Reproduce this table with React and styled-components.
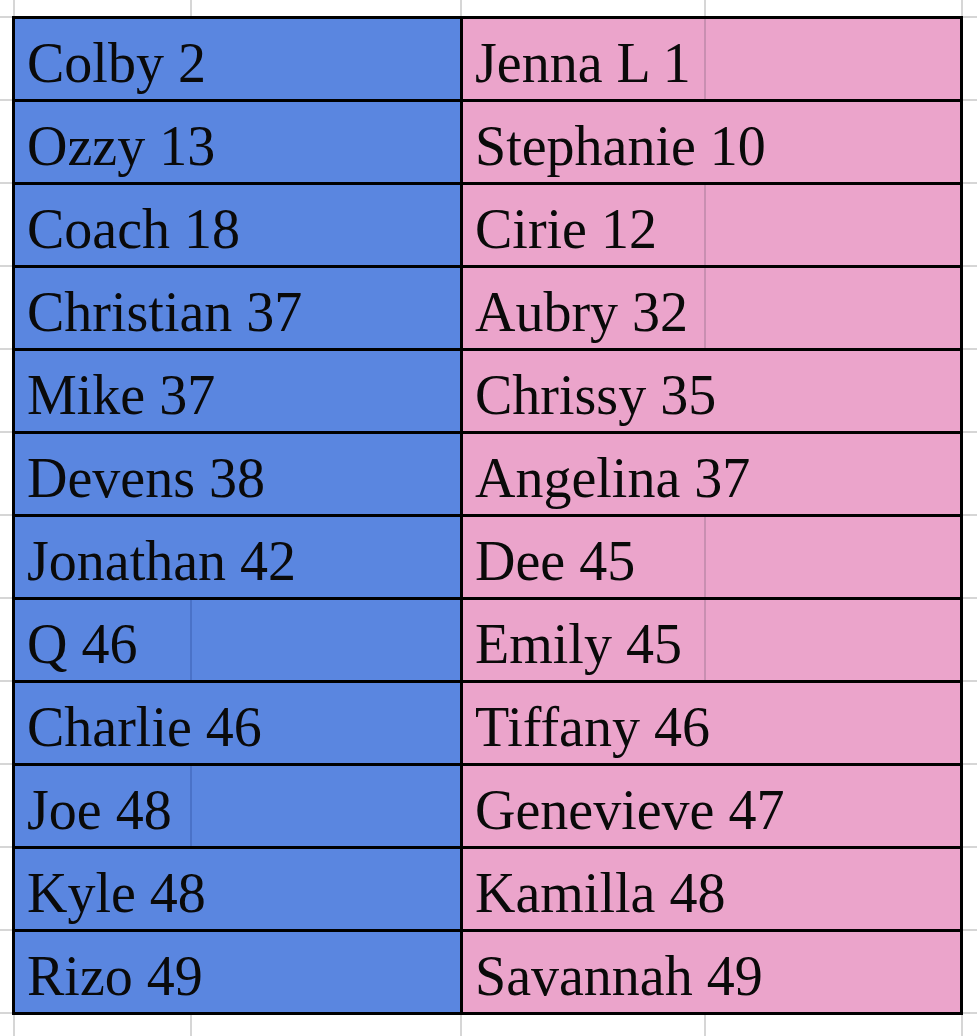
import React from "react";
import styled, { createGlobalStyle } from "styled-components";

const GRID = "#d6d6d6";
const INK = "#0a0a0a";

const Global = createGlobalStyle`
  html, body { margin: 0; padding: 0; background: #ffffff; }
  body { overflow: hidden; }
`;

const Page = styled.div`
  width: 977px;
  height: 1036px;
  display: flex;
  flex-direction: column;
  background: #ffffff;
`;

/* strips of spreadsheet column lines above and below the table */
const ColumnStrip = styled.div`
  height: ${(p) => p.$h}px;
  display: grid;
  grid-template-columns: 15px 177px 270px 244px 257px 1fr;
`;

const StripCell = styled.div`
  box-sizing: border-box;
  border-right: 2px solid ${(p) => (p.$last ? "transparent" : GRID)};
`;

const Middle = styled.div`
  display: flex;
`;

const Gutter = styled.div`
  width: ${(p) => p.$w}px;
  display: flex;
  flex-direction: column;
`;

const GutterCell = styled.div`
  height: 83px;
  box-sizing: border-box;
  border-top: 2px solid ${GRID};
  &:last-child {
    height: 2px;
  }
`;

const Table = styled.div`
  display: grid;
  grid-template-columns: 445px 497px;
  grid-auto-rows: 80px;
  gap: 3px;
  padding: 3px;
  background: #000000;
`;

const Cell = styled.div`
  display: grid;
  grid-template-columns: ${(p) => p.$split}px 1fr;
  background: ${(p) => (p.$team === "blue" ? "#5a86e0" : "#eba4cb")};
  overflow: hidden;
`;

const NameBox = styled.div`
  box-sizing: border-box;
  border-right: 2px solid
    ${(p) =>
      p.$line ? (p.$team === "blue" ? "#4a72c8" : "#c88fb1") : "transparent"};
  padding: 13px 0 0 12px;
  white-space: nowrap;
  overflow: visible;
  position: relative;
  z-index: 1;
`;

const Name = styled.span`
  font-family: "Liberation Serif", "Times New Roman", serif;
  font-size: 56px;
  line-height: 62px;
  color: ${INK};
`;

const blue = [
  ["Colby 2", false],
  ["Ozzy 13", false],
  ["Coach 18", false],
  ["Christian 37", false],
  ["Mike 37", false],
  ["Devens 38", false],
  ["Jonathan 42", false],
  ["Q 46", true],
  ["Charlie 46", false],
  ["Joe 48", true],
  ["Kyle 48", false],
  ["Rizo 49", false],
];

const pink = [
  ["Jenna L 1", true],
  ["Stephanie 10", false],
  ["Cirie 12", true],
  ["Aubry 32", true],
  ["Chrissy 35", false],
  ["Angelina 37", false],
  ["Dee 45", true],
  ["Emily 45", true],
  ["Tiffany 46", false],
  ["Genevieve 47", false],
  ["Kamilla 48", false],
  ["Savannah 49", false],
];

const Strip = ({ h }) => (
  <ColumnStrip $h={h}>
    {[0, 1, 2, 3, 4, 5].map((i) => (
      <StripCell key={i} $last={i === 5} />
    ))}
  </ColumnStrip>
);

const SideGutter = ({ w }) => (
  <Gutter $w={w}>
    {Array.from({ length: 13 }).map((_, i) => (
      <GutterCell key={i} />
    ))}
  </Gutter>
);

export default function App() {
  return (
    <>
      <Global />
      <Page>
        <Strip h={16} />
        <Middle>
          <SideGutter w={12} />
          <Table>
            {blue.map((b, i) => [
              <Cell key={`b${i}`} $team="blue" $split={177}>
                <NameBox $team="blue" $line={b[1]}>
                  <Name>{b[0]}</Name>
                </NameBox>
                <div />
              </Cell>,
              <Cell key={`p${i}`} $team="pink" $split={243}>
                <NameBox $team="pink" $line={pink[i][1]}>
                  <Name>{pink[i][0]}</Name>
                </NameBox>
                <div />
              </Cell>,
            ])}
          </Table>
          <SideGutter w={14} />
        </Middle>
        <Strip h={21} />
      </Page>
    </>
  );
}
